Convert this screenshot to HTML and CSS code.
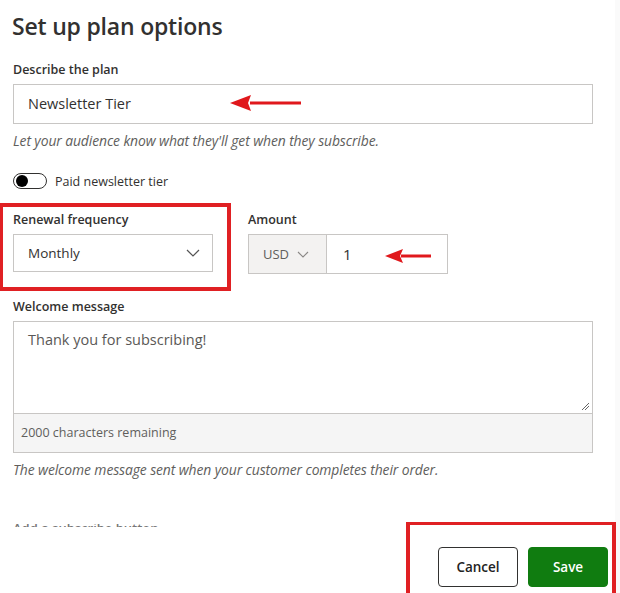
FILE: index.html
```html
<!DOCTYPE html>
<html lang="en">
<head>
<meta charset="UTF-8">
<title>Set up plan options</title>
<link rel="stylesheet" href="styles.css">
</head>
<body>
<div class="panel">
<h1>Set up plan options</h1>
<form class="plan-form">
<div class="field">
<label>Describe the plan</label>
<div class="textbox">Newsletter Tier</div>
<p class="hint">Let your audience know what they'll get when they subscribe.</p>
</div>
<div class="toggle-row">
<span class="toggle"><span class="knob"></span></span>
<span>Paid newsletter tier</span>
</div>
<div class="row">
<div class="field freq">
<label>Renewal frequency</label>
<div class="select">Monthly
<svg width="14" height="8" viewBox="0 0 14 8"><path d="M1 1l6 6 6-6" fill="none" stroke="#555" stroke-width="1.2"/></svg>
</div>
</div>
<div class="field">
<label>Amount</label>
<div class="amount">
<div class="currency">USD
<svg width="12" height="7" viewBox="0 0 12 7"><path d="M1 1l5 5 5-5" fill="none" stroke="#8a8886" stroke-width="1.1"/></svg>
</div>
<div class="value">1</div>
</div>
</div>
</div>
<div class="field welcome">
<label>Welcome message</label>
<div class="message">
<div class="message-text">Thank you for subscribing!
<svg class="grip" width="9" height="9" viewBox="0 0 9 9"><path d="M1 8l7-7M4 8l4-4" stroke="#666" stroke-width="1"/></svg>
</div>
<div class="counter">2000 characters remaining</div>
</div>
<p class="hint">The welcome message sent when your customer completes their order.</p>
</div>
<div class="footer">
<div class="cut-text"><span>Add a subscribe button</span></div>
<div class="actions">
<button type="button" class="btn">Cancel</button>
<button type="button" class="btn primary">Save</button>
</div>
</div>
</form>
</div>

<!-- annotations drawn over the form -->
<div class="mark mark-freq"></div>
<div class="mark mark-actions"></div>
<svg class="arrow arrow-plan" width="72" height="20" viewBox="0 0 72 20"><path d="M20 8.5h51v3H20z" fill="#e0181c"/><path d="M0 10L21 2 18 10 21 18z" fill="#e0181c"/></svg>
<svg class="arrow arrow-amount" width="46" height="18" viewBox="0 0 46 18"><path d="M16 7.5h30v3H16z" fill="#e0181c"/><path d="M0 9L18 2 15 9 18 16z" fill="#e0181c"/></svg>
</body>
</html>
```

FILE: styles.css
```css
body {
  margin: 0;
  font-family: "Open Sans", "Noto Sans", sans-serif;
  color: #323130;
  background: #fff;
  width: 620px;
  height: 593px;
  overflow: hidden;
  position: relative;
}
.panel {
  padding: 10px 22px 0 13px;
  border-right: 5px solid #fafafa;
  height: 593px;
  box-sizing: border-box;
  width: 620px;
}
h1 {
  margin: 0 0 0 -1px;
  font-size: 23px;
  font-weight: 600;
  line-height: 32px;
  letter-spacing: -0.2px;
}
.plan-form {
  margin-top: 18px;
}
label {
  display: block;
  font-size: 12.5px;
  font-weight: 600;
  line-height: 20px;
  margin-bottom: 4px;
}
.textbox {
  height: 38px;
  border: 1px solid #c8c6c4;
  padding: 0 14px;
  font-size: 14.5px;
  line-height: 38px;
}
.hint {
  margin: 8px 0 0;
  font-size: 13.9px;
  font-style: italic;
  color: #605e5c;
  line-height: 18px;
  letter-spacing: -0.1px;
}
.toggle-row {
  display: flex;
  align-items: center;
  gap: 8px;
  margin-top: 22px;
  font-size: 12.5px;
  height: 18px;
}
.toggle {
  width: 30px;
  height: 14px;
  border: 1px solid #323130;
  border-radius: 9px;
  display: flex;
  align-items: center;
  padding-left: 2px;
}
.knob {
  width: 12px;
  height: 12px;
  border-radius: 50%;
  background: #000;
}
.row {
  display: flex;
  gap: 35px;
  margin-top: 20px;
}
.freq {
  width: 200px;
}
.select {
  height: 36px;
  border: 1px solid #c8c6c4;
  padding: 0 12px 0 14px;
  font-size: 13.5px;
  display: flex;
  align-items: center;
  justify-content: space-between;
}
.amount {
  display: flex;
  height: 38px;
  border: 1px solid #c8c6c4;
  width: 198px;
}
.currency {
  width: 78px;
  background: #f3f2f1;
  border-right: 1px solid #c8c6c4;
  display: flex;
  align-items: center;
  gap: 8px;
  padding-left: 14px;
  box-sizing: border-box;
  font-size: 13px;
  color: #605e5c;
}
.value {
  padding-left: 16px;
  font-size: 15px;
  line-height: 38px;
}
.welcome {
  margin-top: 23px;
}
.message {
  border: 1px solid #c8c6c4;
}
.message-text {
  height: 93px;
  border: 1px solid #c8c6c4;
  margin: -1px -1px 0;
  padding: 8px 14px;
  box-sizing: border-box;
  font-size: 14.5px;
  color: #5a5856;
  position: relative;
}
.grip {
  position: absolute;
  right: 2px;
  bottom: 2px;
}
.counter {
  background: #f5f5f5;
  height: 38px;
  padding-left: 7px;
  font-size: 12.5px;
  line-height: 38px;
  color: #605e5c;
}
.footer {
  display: flex;
  justify-content: space-between;
  align-items: flex-start;
  margin-top: 45px;
}
.cut-text {
  height: 3px;
  overflow: hidden;
  font-size: 13px;
  font-weight: 600;
  color: #777;
  line-height: 20px;
}
.cut-text span {
  display: block;
  margin-top: -6px;
}
.actions {
  display: flex;
  gap: 10px;
  margin-top: 23px;
  margin-right: -15px;
}
.btn {
  height: 40px;
  width: 80px;
  border: 1px solid #323130;
  border-radius: 4px;
  background: #fff;
  font-family: "Open Sans", "Noto Sans", sans-serif;
  font-size: 13.5px;
  font-weight: 600;
  color: #222;
}
.primary {
  background: #107c10;
  border-color: #107c10;
  color: #fff;
}
.mark {
  position: absolute;
  border: 4px solid #e02023;
}
.mark-freq {
  left: -1px;
  top: 203px;
  width: 224px;
  height: 80px;
}
.mark-actions {
  left: 406px;
  top: 522px;
  width: 202px;
  height: 80px;
  border-width: 3px 4px;
}
.arrow {
  position: absolute;
}
.arrow-plan {
  left: 230px;
  top: 93px;
}
.arrow-amount {
  left: 385px;
  top: 247px;
}
```
